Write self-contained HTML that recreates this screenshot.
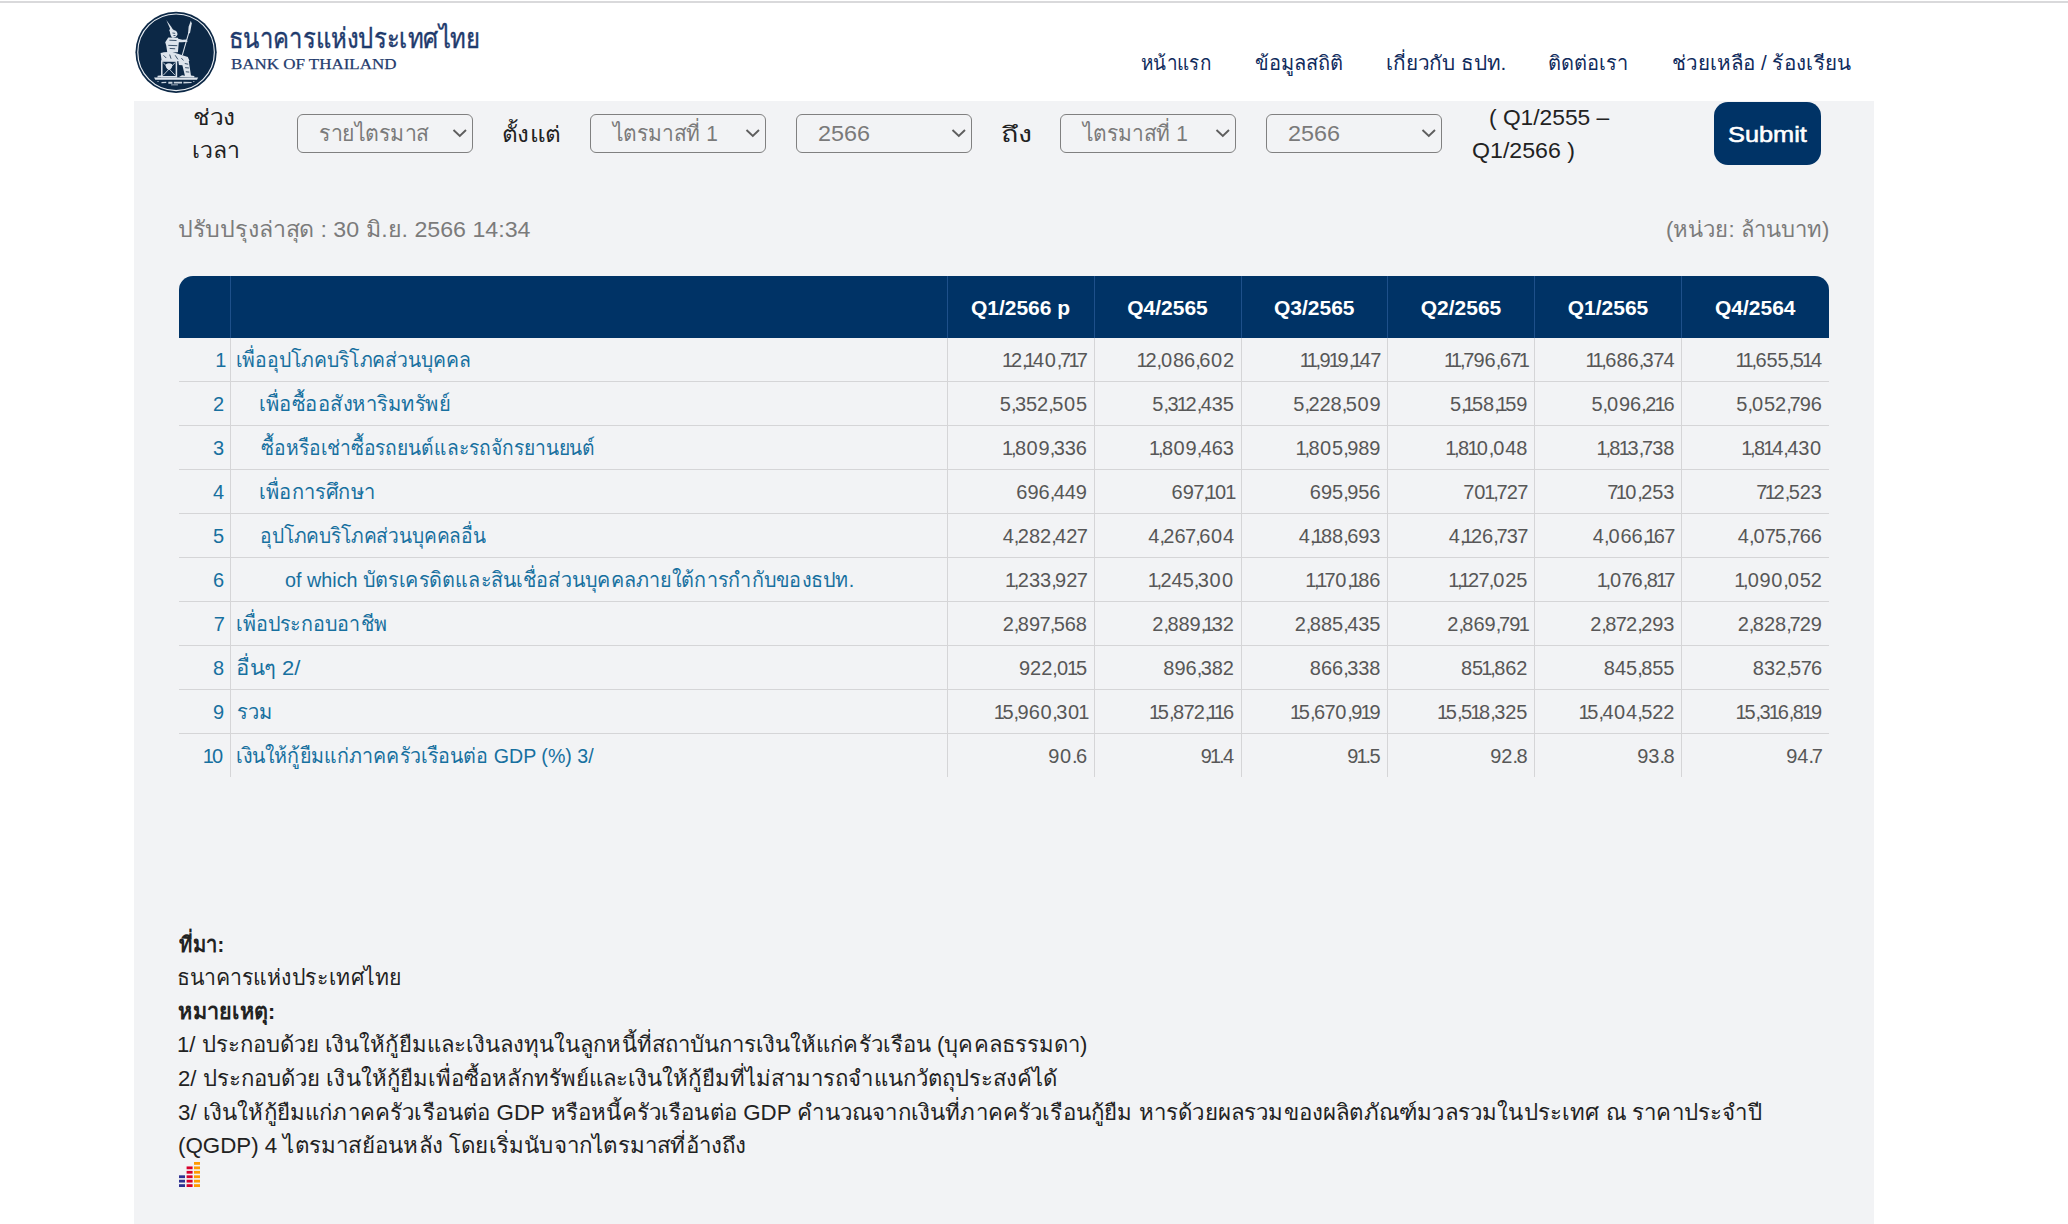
<!DOCTYPE html>
<html><head><meta charset="utf-8"><title>Bank of Thailand</title><style>
html,body{margin:0;padding:0}
body{width:2068px;height:1224px;overflow:hidden;background:#fff;position:relative;font-family:"Liberation Sans",sans-serif}
.t{position:absolute;white-space:nowrap}
.t span{display:inline}
.n{font-size:20px;line-height:30px;color:#575757}
.n i{font-style:normal}
.n .o{margin-left:-1.8px;letter-spacing:-2.3px}
.n .z{margin-left:.6px;letter-spacing:.8px}
.n .s{margin-left:-.6px;letter-spacing:-.9px}
.n .c{letter-spacing:-1.6px}
.sel{position:absolute;top:114px;width:174px;height:37px;border:1px solid #808080;border-radius:6px;box-sizing:content-box}
</style></head>
<body>
<div style="position:absolute;left:0;top:1px;width:2068px;height:2px;background:#d9d9db"></div>
<svg style="position:absolute;left:134px;top:10px" width="84" height="84" viewBox="0 0 1224 1224">
<circle cx="613" cy="616" r="592" fill="#0c2846"/>
<circle cx="613" cy="616" r="558" fill="none" stroke="#e9eef3" stroke-width="17"/>
<g fill="#dde4ec">
<path d="M470 145 L540 240 L565 280 L598 302 L512 308 L525 270 Z"/>
<path d="M522 300 L600 298 Q640 320 632 365 Q615 405 565 408 Q525 390 522 300 Z"/>
<path d="M500 400 L640 405 L655 450 L640 615 L485 620 L470 520 L455 470 Z"/>
<path d="M640 418 L705 432 L770 430 L780 462 L700 470 L640 470 Z"/>
<path d="M828 158 L842 198 L815 338 L788 338 L796 245 Z"/>
<path d="M793 320 L809 322 L712 660 L697 656 Z"/>
<path d="M388 628 Q430 605 560 612 L785 685 L808 742 L600 748 L402 738 Z"/>
<path d="M405 742 L618 742 L618 972 L405 972 Z" fill="none" stroke="#dde4ec" stroke-width="22"/>
<path d="M425 765 L600 952 M600 765 L425 952" stroke="#dde4ec" stroke-width="12"/>
<path d="M465 790 Q510 765 555 790 Q570 845 510 875 Q450 845 465 790 Z"/>
<path d="M645 748 L795 722 L830 955 L880 962 L878 982 L655 978 L700 952 L742 958 L705 805 L655 802 Z"/>
<path d="M345 958 L418 950 L418 978 L340 982 Z"/>
<path d="M292 985 L935 985 L918 1016 L310 1016 Z"/>
</g>
<g stroke="#0c2846" stroke-width="13" fill="none" opacity="0.85">
<path d="M515 440 L620 445 M500 515 L630 520 M520 560 L600 565"/>
<path d="M430 660 L470 700 M520 650 L540 710 M600 660 L640 720 M690 700 L720 735"/>
<path d="M560 335 L600 340 M575 372 L605 372"/>
<path d="M740 780 L790 790 M745 840 L800 845 M755 900 L805 905"/>
</g>
<g fill="#c9d3de">
<path d="M340 1035 L360 1035 L360 1045 L340 1045 Z M862 1035 L880 1035 L880 1045 L862 1045 Z"/>
<path d="M400 1050 L470 1045 L470 1062 L400 1066 Z M500 1045 L560 1045 L560 1075 L500 1075 Z M580 1045 L700 1045 L700 1070 L580 1070 Z M720 1045 L840 1050 L840 1065 L720 1070 Z"/>
<path d="M540 1085 L640 1085 L640 1097 L540 1097 Z"/>
</g></svg>
<div style="position:absolute;left:134px;top:101px;width:1740px;height:1123px;background:#f2f3f5"></div>
<div class="sel" style="left:297px"></div><svg style="position:absolute;left:452px;top:128px" width="16" height="10" viewBox="0 0 16 10"><path d="M1.5 2 L7.8 8 L14 2" fill="none" stroke="#5e5e5e" stroke-width="1.9"/></svg><div class="sel" style="left:590px"></div><svg style="position:absolute;left:745px;top:128px" width="16" height="10" viewBox="0 0 16 10"><path d="M1.5 2 L7.8 8 L14 2" fill="none" stroke="#5e5e5e" stroke-width="1.9"/></svg><div class="sel" style="left:796px"></div><svg style="position:absolute;left:951px;top:128px" width="16" height="10" viewBox="0 0 16 10"><path d="M1.5 2 L7.8 8 L14 2" fill="none" stroke="#5e5e5e" stroke-width="1.9"/></svg><div class="sel" style="left:1060px"></div><svg style="position:absolute;left:1215px;top:128px" width="16" height="10" viewBox="0 0 16 10"><path d="M1.5 2 L7.8 8 L14 2" fill="none" stroke="#5e5e5e" stroke-width="1.9"/></svg><div class="sel" style="left:1266px"></div><svg style="position:absolute;left:1421px;top:128px" width="16" height="10" viewBox="0 0 16 10"><path d="M1.5 2 L7.8 8 L14 2" fill="none" stroke="#5e5e5e" stroke-width="1.9"/></svg>
<div style="position:absolute;left:1714px;top:102px;width:107px;height:63px;border-radius:14px;background:#003366"></div>
<div style="position:absolute;left:179px;top:276px;width:1650px;height:62px;border-radius:14px 14px 0 0;background:#003366"></div>
<div style="position:absolute;left:947px;top:276px;width:1px;height:62px;background:#1e508a"></div><div style="position:absolute;left:947px;top:338px;width:1px;height:439px;background:#d5d5d7"></div><div style="position:absolute;left:1094px;top:276px;width:1px;height:62px;background:#1e508a"></div><div style="position:absolute;left:1094px;top:338px;width:1px;height:439px;background:#d5d5d7"></div><div style="position:absolute;left:1241px;top:276px;width:1px;height:62px;background:#1e508a"></div><div style="position:absolute;left:1241px;top:338px;width:1px;height:439px;background:#d5d5d7"></div><div style="position:absolute;left:1387px;top:276px;width:1px;height:62px;background:#1e508a"></div><div style="position:absolute;left:1387px;top:338px;width:1px;height:439px;background:#d5d5d7"></div><div style="position:absolute;left:1534px;top:276px;width:1px;height:62px;background:#1e508a"></div><div style="position:absolute;left:1534px;top:338px;width:1px;height:439px;background:#d5d5d7"></div><div style="position:absolute;left:1681px;top:276px;width:1px;height:62px;background:#1e508a"></div><div style="position:absolute;left:1681px;top:338px;width:1px;height:439px;background:#d5d5d7"></div><div style="position:absolute;left:230px;top:276px;width:1px;height:62px;background:#1e508a"></div><div style="position:absolute;left:230px;top:338px;width:1px;height:439px;background:#d5d5d7"></div><div style="position:absolute;left:179px;top:381px;width:1650px;height:1px;background:#d5d5d7"></div><div style="position:absolute;left:179px;top:425px;width:1650px;height:1px;background:#d5d5d7"></div><div style="position:absolute;left:179px;top:469px;width:1650px;height:1px;background:#d5d5d7"></div><div style="position:absolute;left:179px;top:513px;width:1650px;height:1px;background:#d5d5d7"></div><div style="position:absolute;left:179px;top:557px;width:1650px;height:1px;background:#d5d5d7"></div><div style="position:absolute;left:179px;top:601px;width:1650px;height:1px;background:#d5d5d7"></div><div style="position:absolute;left:179px;top:645px;width:1650px;height:1px;background:#d5d5d7"></div><div style="position:absolute;left:179px;top:689px;width:1650px;height:1px;background:#d5d5d7"></div><div style="position:absolute;left:179px;top:733px;width:1650px;height:1px;background:#d5d5d7"></div>
<div class="t" id="title" style="top:17.5px;font-size:28px;line-height:42px;color:#1f3b6d;-webkit-text-stroke:0.4px #1f3b6d;left:229.30px;transform-origin:0 0;transform:scaleX(0.8517);"><span>ธนาคารแห่งประเทศไทย</span></div><div class="t" id="bot" style="top:52.0px;font-size:15.5px;line-height:23px;color:#1f3b6d;-webkit-text-stroke:0.25px #1f3b6d;font-family:'Liberation Serif', serif;left:230.91px;transform-origin:0 0;transform:scaleX(1.0933);"><span>BANK OF THAILAND</span></div><div class="t" id="nav0" style="top:47.5px;font-size:20px;line-height:30px;color:#102b5c;left:1141.06px;transform-origin:0 0;transform:scaleX(0.9444);"><span>หน้าแรก</span></div><div class="t" id="nav1" style="top:47.5px;font-size:20px;line-height:30px;color:#102b5c;left:1255.00px;transform-origin:0 0;"><span>ข้อมูลสถิติ</span></div><div class="t" id="nav2" style="top:47.5px;font-size:20px;line-height:30px;color:#102b5c;left:1385.93px;transform-origin:0 0;transform:scaleX(1.0357);"><span>เกี่ยวกับ ธปท.</span></div><div class="t" id="nav3" style="top:47.5px;font-size:20px;line-height:30px;color:#102b5c;left:1548.00px;transform-origin:0 0;"><span>ติดต่อเรา</span></div><div class="t" id="nav4" style="top:47.5px;font-size:20px;line-height:30px;color:#102b5c;left:1671.97px;transform-origin:0 0;transform:scaleX(1.0289);"><span>ช่วยเหลือ / ร้องเรียน</span></div><div class="t" id="f_chuang" style="top:100.5px;font-size:22px;line-height:33px;color:#222222;left:192.89px;transform-origin:0 0;transform:scaleX(1.1143);"><span>ช่วง</span></div><div class="t" id="f_wela" style="top:134.0px;font-size:22px;line-height:33px;color:#222222;left:191.90px;transform-origin:0 0;transform:scaleX(1.0488);"><span>เวลา</span></div><div class="t" id="f_tangtae" style="top:117.5px;font-size:22px;line-height:33px;color:#222222;left:501.80px;transform-origin:0 0;transform:scaleX(1.1000);"><span>ตั้งแต่</span></div><div class="t" id="f_thueng" style="top:117.5px;font-size:22px;line-height:33px;color:#222222;left:1000.54px;transform-origin:0 0;transform:scaleX(1.3095);"><span>ถึง</span></div><div class="t" id="s1" style="top:117.0px;font-size:22px;line-height:33px;color:#7a7a7a;left:319.04px;transform-origin:0 0;transform:scaleX(0.9646);"><span>รายไตรมาส</span></div><div class="t" id="s2" style="top:117.0px;font-size:22px;line-height:33px;color:#7a7a7a;left:612.98px;transform-origin:0 0;transform:scaleX(0.9500);"><span>ไตรมาสที่ 1</span></div><div class="t" id="s3" style="top:117.0px;font-size:22px;line-height:33px;color:#7a7a7a;left:817.94px;transform-origin:0 0;transform:scaleX(1.0638);"><span>2566</span></div><div class="t" id="s4" style="top:117.0px;font-size:22px;line-height:33px;color:#7a7a7a;left:1082.97px;transform-origin:0 0;transform:scaleX(0.9500);"><span>ไตรมาสที่ 1</span></div><div class="t" id="s5" style="top:117.0px;font-size:22px;line-height:33px;color:#7a7a7a;left:1287.94px;transform-origin:0 0;transform:scaleX(1.0638);"><span>2566</span></div><div class="t" id="range1" style="top:101.0px;font-size:22px;line-height:33px;color:#222222;left:1488.97px;transform-origin:0 0;transform:scaleX(1.0348);"><span>( Q1/2555 –</span></div><div class="t" id="range2" style="top:134.0px;font-size:22px;line-height:33px;color:#222222;left:1471.95px;transform-origin:0 0;transform:scaleX(1.0521);"><span>Q1/2566 )</span></div><div class="t" id="submit" style="top:118.0px;font-size:22px;line-height:33px;color:#ffffff;-webkit-text-stroke:0.55px #ffffff;left:1727.70px;transform-origin:0 0;transform:scaleX(1.1515);"><span>Submit</span></div><div class="t" id="upd" style="top:213.0px;font-size:22px;line-height:33px;color:#7b7b7b;left:177.92px;transform-origin:0 0;transform:scaleX(1.0541);"><span>ปรับปรุงล่าสุด : 30 มิ.ย. 2566 14:34</span></div><div class="t" id="unit" style="top:213.0px;font-size:22px;line-height:33px;color:#7b7b7b;left:1666.00px;transform-origin:0 0;transform:scaleX(1.0031);"><span>(หน่วย: ล้านบาท)</span></div><div class="t" id="h0" style="top:291.5px;font-size:21px;line-height:32px;color:#ffffff;font-weight:700;left:947.0px;width:147.0px;text-align:center;"><span>Q1/2566 p</span></div><div class="t" id="h1" style="top:291.5px;font-size:21px;line-height:32px;color:#ffffff;font-weight:700;left:1094.0px;width:147.0px;text-align:center;"><span>Q4/2565</span></div><div class="t" id="h2" style="top:291.5px;font-size:21px;line-height:32px;color:#ffffff;font-weight:700;left:1241.0px;width:146.5px;text-align:center;"><span>Q3/2565</span></div><div class="t" id="h3" style="top:291.5px;font-size:21px;line-height:32px;color:#ffffff;font-weight:700;left:1387.5px;width:147.0px;text-align:center;"><span>Q2/2565</span></div><div class="t" id="h4" style="top:291.5px;font-size:21px;line-height:32px;color:#ffffff;font-weight:700;left:1534.5px;width:147.0px;text-align:center;"><span>Q1/2565</span></div><div class="t" id="h5" style="top:291.5px;font-size:21px;line-height:32px;color:#ffffff;font-weight:700;left:1681.5px;width:147.5px;text-align:center;"><span>Q4/2564</span></div><div class="t" id="lab0" style="top:343.5px;font-size:21px;line-height:32px;color:#17709f;left:236.16px;transform-origin:0 0;transform:scaleX(0.9219);"><span>เพื่ออุปโภคบริโภคส่วนบุคคล</span></div><div class="t" id="lab1" style="top:387.5px;font-size:21px;line-height:32px;color:#17709f;left:259.48px;transform-origin:0 0;transform:scaleX(0.9607);"><span>เพื่อซื้ออสังหาริมทรัพย์</span></div><div class="t" id="lab2" style="top:431.5px;font-size:21px;line-height:32px;color:#17709f;left:260.50px;transform-origin:0 0;transform:scaleX(0.9154);"><span>ซื้อหรือเช่าซื้อรถยนต์และรถจักรยานยนต์</span></div><div class="t" id="lab3" style="top:475.5px;font-size:21px;line-height:32px;color:#17709f;left:259.49px;transform-origin:0 0;transform:scaleX(0.9559);"><span>เพื่อการศึกษา</span></div><div class="t" id="lab4" style="top:519.5px;font-size:21px;line-height:32px;color:#17709f;left:259.60px;transform-origin:0 0;transform:scaleX(0.9098);"><span>อุปโภคบริโภคส่วนบุคคลอื่น</span></div><div class="t" id="lab5" style="top:563.5px;font-size:21px;line-height:32px;color:#17709f;left:284.83px;transform-origin:0 0;transform:scaleX(0.9412);"><span>of which บัตรเครดิตและสินเชื่อส่วนบุคคลภายใต้การกำกับของธปท.</span></div><div class="t" id="lab6" style="top:607.5px;font-size:21px;line-height:32px;color:#17709f;left:236.12px;transform-origin:0 0;transform:scaleX(0.9380);"><span>เพื่อประกอบอาชีพ</span></div><div class="t" id="lab7" style="top:651.5px;font-size:21px;line-height:32px;color:#17709f;left:235.90px;transform-origin:0 0;transform:scaleX(1.0508);"><span>อื่นๆ 2/</span></div><div class="t" id="lab8" style="top:695.5px;font-size:21px;line-height:32px;color:#17709f;left:237.04px;transform-origin:0 0;transform:scaleX(0.9559);"><span>รวม</span></div><div class="t" id="lab9" style="top:739.5px;font-size:21px;line-height:32px;color:#17709f;left:236.13px;transform-origin:0 0;transform:scaleX(0.9344);"><span>เงินให้กู้ยืมแก่ภาคครัวเรือนต่อ GDP (%) 3/</span></div><div class="t" id="fn_src" style="top:928.0px;font-size:22px;line-height:33px;color:#222222;font-weight:700;left:179.00px;transform-origin:0 0;transform:scaleX(0.9149);"><span>ที่มา:</span></div><div class="t" id="fn_bot" style="top:961.0px;font-size:22px;line-height:33px;color:#222222;left:177.07px;transform-origin:0 0;transform:scaleX(0.9651);"><span>ธนาคารแห่งประเทศไทย</span></div><div class="t" id="fn_note" style="top:995.0px;font-size:22px;line-height:33px;color:#222222;font-weight:700;left:178.02px;transform-origin:0 0;transform:scaleX(0.9792);"><span>หมายเหตุ:</span></div><div class="t" id="fn1" style="top:1028.0px;font-size:22px;line-height:33px;color:#222222;left:176.99px;transform-origin:0 0;transform:scaleX(1.0044);"><span>1/ ประกอบด้วย เงินให้กู้ยืมและเงินลงทุนในลูกหนี้ที่สถาบันการเงินให้แก่ครัวเรือน (บุคคลธรรมดา)</span></div><div class="t" id="fn2" style="top:1061.5px;font-size:22px;line-height:33px;color:#222222;left:177.99px;transform-origin:0 0;transform:scaleX(1.0057);"><span>2/ ประกอบด้วย เงินให้กู้ยืมเพื่อซื้อหลักทรัพย์และเงินให้กู้ยืมที่ไม่สามารถจำแนกวัตถุประสงค์ได้</span></div><div class="t" id="fn3" style="top:1095.5px;font-size:22px;line-height:33px;color:#222222;left:177.99px;transform-origin:0 0;transform:scaleX(1.0128);"><span>3/ เงินให้กู้ยืมแก่ภาคครัวเรือนต่อ GDP หรือหนี้ครัวเรือนต่อ GDP คำนวณจากเงินที่ภาคครัวเรือนกู้ยืม หารด้วยผลรวมของผลิตภัณฑ์มวลรวมในประเทศ ณ ราคาประจำปี</span></div><div class="t" id="fn4" style="top:1128.5px;font-size:22px;line-height:33px;color:#222222;left:177.98px;transform-origin:0 0;transform:scaleX(1.0153);"><span>(QGDP) 4 ไตรมาสย้อนหลัง โดยเริ่มนับจากไตรมาสที่อ้างถึง</span></div>
<div class="t n" style="top:345.0px;left:179.0px;width:45px;text-align:right;color:#17709f;font-size:20px;line-height:30px;"><i class="o">1</i></div><div class="t n" style="top:345.0px;right:981.0px;"><i class="o">1</i>2<i class="c">,</i><i class="o">1</i>4<i class="z">0</i><i class="c">,</i><i class="s">7</i><i class="o">1</i><i class="s">7</i></div><div class="t n" style="top:345.0px;right:834.0px;"><i class="o">1</i>2<i class="c">,</i><i class="z">0</i>86<i class="c">,</i>6<i class="z">0</i>2</div><div class="t n" style="top:345.0px;right:687.5px;"><i class="o">1</i><i class="o">1</i><i class="c">,</i>9<i class="o">1</i>9<i class="c">,</i><i class="o">1</i>4<i class="s">7</i></div><div class="t n" style="top:345.0px;right:540.5px;"><i class="o">1</i><i class="o">1</i><i class="c">,</i><i class="s">7</i>96<i class="c">,</i>6<i class="s">7</i><i class="o">1</i></div><div class="t n" style="top:345.0px;right:393.5px;"><i class="o">1</i><i class="o">1</i><i class="c">,</i>686<i class="c">,</i>3<i class="s">7</i>4</div><div class="t n" style="top:345.0px;right:246.0px;"><i class="o">1</i><i class="o">1</i><i class="c">,</i>655<i class="c">,</i>5<i class="o">1</i>4</div><div class="t n" style="top:389.0px;left:179.0px;width:45px;text-align:right;color:#17709f;font-size:20px;line-height:30px;">2</div><div class="t n" style="top:389.0px;right:981.0px;">5<i class="c">,</i>352<i class="c">,</i>5<i class="z">0</i>5</div><div class="t n" style="top:389.0px;right:834.0px;">5<i class="c">,</i>3<i class="o">1</i>2<i class="c">,</i>435</div><div class="t n" style="top:389.0px;right:687.5px;">5<i class="c">,</i>228<i class="c">,</i>5<i class="z">0</i>9</div><div class="t n" style="top:389.0px;right:540.5px;">5<i class="c">,</i><i class="o">1</i>58<i class="c">,</i><i class="o">1</i>59</div><div class="t n" style="top:389.0px;right:393.5px;">5<i class="c">,</i><i class="z">0</i>96<i class="c">,</i>2<i class="o">1</i>6</div><div class="t n" style="top:389.0px;right:246.0px;">5<i class="c">,</i><i class="z">0</i>52<i class="c">,</i><i class="s">7</i>96</div><div class="t n" style="top:433.0px;left:179.0px;width:45px;text-align:right;color:#17709f;font-size:20px;line-height:30px;">3</div><div class="t n" style="top:433.0px;right:981.0px;"><i class="o">1</i><i class="c">,</i>8<i class="z">0</i>9<i class="c">,</i>336</div><div class="t n" style="top:433.0px;right:834.0px;"><i class="o">1</i><i class="c">,</i>8<i class="z">0</i>9<i class="c">,</i>463</div><div class="t n" style="top:433.0px;right:687.5px;"><i class="o">1</i><i class="c">,</i>8<i class="z">0</i>5<i class="c">,</i>989</div><div class="t n" style="top:433.0px;right:540.5px;"><i class="o">1</i><i class="c">,</i>8<i class="o">1</i><i class="z">0</i><i class="c">,</i><i class="z">0</i>48</div><div class="t n" style="top:433.0px;right:393.5px;"><i class="o">1</i><i class="c">,</i>8<i class="o">1</i>3<i class="c">,</i><i class="s">7</i>38</div><div class="t n" style="top:433.0px;right:246.0px;"><i class="o">1</i><i class="c">,</i>8<i class="o">1</i>4<i class="c">,</i>43<i class="z">0</i></div><div class="t n" style="top:477.0px;left:179.0px;width:45px;text-align:right;color:#17709f;font-size:20px;line-height:30px;">4</div><div class="t n" style="top:477.0px;right:981.0px;">696<i class="c">,</i>449</div><div class="t n" style="top:477.0px;right:834.0px;">69<i class="s">7</i><i class="c">,</i><i class="o">1</i><i class="z">0</i><i class="o">1</i></div><div class="t n" style="top:477.0px;right:687.5px;">695<i class="c">,</i>956</div><div class="t n" style="top:477.0px;right:540.5px;"><i class="s">7</i><i class="z">0</i><i class="o">1</i><i class="c">,</i><i class="s">7</i>2<i class="s">7</i></div><div class="t n" style="top:477.0px;right:393.5px;"><i class="s">7</i><i class="o">1</i><i class="z">0</i><i class="c">,</i>253</div><div class="t n" style="top:477.0px;right:246.0px;"><i class="s">7</i><i class="o">1</i>2<i class="c">,</i>523</div><div class="t n" style="top:521.0px;left:179.0px;width:45px;text-align:right;color:#17709f;font-size:20px;line-height:30px;">5</div><div class="t n" style="top:521.0px;right:981.0px;">4<i class="c">,</i>282<i class="c">,</i>42<i class="s">7</i></div><div class="t n" style="top:521.0px;right:834.0px;">4<i class="c">,</i>26<i class="s">7</i><i class="c">,</i>6<i class="z">0</i>4</div><div class="t n" style="top:521.0px;right:687.5px;">4<i class="c">,</i><i class="o">1</i>88<i class="c">,</i>693</div><div class="t n" style="top:521.0px;right:540.5px;">4<i class="c">,</i><i class="o">1</i>26<i class="c">,</i><i class="s">7</i>3<i class="s">7</i></div><div class="t n" style="top:521.0px;right:393.5px;">4<i class="c">,</i><i class="z">0</i>66<i class="c">,</i><i class="o">1</i>6<i class="s">7</i></div><div class="t n" style="top:521.0px;right:246.0px;">4<i class="c">,</i><i class="z">0</i><i class="s">7</i>5<i class="c">,</i><i class="s">7</i>66</div><div class="t n" style="top:565.0px;left:179.0px;width:45px;text-align:right;color:#17709f;font-size:20px;line-height:30px;">6</div><div class="t n" style="top:565.0px;right:981.0px;"><i class="o">1</i><i class="c">,</i>233<i class="c">,</i>92<i class="s">7</i></div><div class="t n" style="top:565.0px;right:834.0px;"><i class="o">1</i><i class="c">,</i>245<i class="c">,</i>3<i class="z">0</i><i class="z">0</i></div><div class="t n" style="top:565.0px;right:687.5px;"><i class="o">1</i><i class="c">,</i><i class="o">1</i><i class="s">7</i><i class="z">0</i><i class="c">,</i><i class="o">1</i>86</div><div class="t n" style="top:565.0px;right:540.5px;"><i class="o">1</i><i class="c">,</i><i class="o">1</i>2<i class="s">7</i><i class="c">,</i><i class="z">0</i>25</div><div class="t n" style="top:565.0px;right:393.5px;"><i class="o">1</i><i class="c">,</i><i class="z">0</i><i class="s">7</i>6<i class="c">,</i>8<i class="o">1</i><i class="s">7</i></div><div class="t n" style="top:565.0px;right:246.0px;"><i class="o">1</i><i class="c">,</i><i class="z">0</i>9<i class="z">0</i><i class="c">,</i><i class="z">0</i>52</div><div class="t n" style="top:609.0px;left:179.0px;width:45px;text-align:right;color:#17709f;font-size:20px;line-height:30px;"><i class="s">7</i></div><div class="t n" style="top:609.0px;right:981.0px;">2<i class="c">,</i>89<i class="s">7</i><i class="c">,</i>568</div><div class="t n" style="top:609.0px;right:834.0px;">2<i class="c">,</i>889<i class="c">,</i><i class="o">1</i>32</div><div class="t n" style="top:609.0px;right:687.5px;">2<i class="c">,</i>885<i class="c">,</i>435</div><div class="t n" style="top:609.0px;right:540.5px;">2<i class="c">,</i>869<i class="c">,</i><i class="s">7</i>9<i class="o">1</i></div><div class="t n" style="top:609.0px;right:393.5px;">2<i class="c">,</i>8<i class="s">7</i>2<i class="c">,</i>293</div><div class="t n" style="top:609.0px;right:246.0px;">2<i class="c">,</i>828<i class="c">,</i><i class="s">7</i>29</div><div class="t n" style="top:653.0px;left:179.0px;width:45px;text-align:right;color:#17709f;font-size:20px;line-height:30px;">8</div><div class="t n" style="top:653.0px;right:981.0px;">922<i class="c">,</i><i class="z">0</i><i class="o">1</i>5</div><div class="t n" style="top:653.0px;right:834.0px;">896<i class="c">,</i>382</div><div class="t n" style="top:653.0px;right:687.5px;">866<i class="c">,</i>338</div><div class="t n" style="top:653.0px;right:540.5px;">85<i class="o">1</i><i class="c">,</i>862</div><div class="t n" style="top:653.0px;right:393.5px;">845<i class="c">,</i>855</div><div class="t n" style="top:653.0px;right:246.0px;">832<i class="c">,</i>5<i class="s">7</i>6</div><div class="t n" style="top:697.0px;left:179.0px;width:45px;text-align:right;color:#17709f;font-size:20px;line-height:30px;">9</div><div class="t n" style="top:697.0px;right:981.0px;"><i class="o">1</i>5<i class="c">,</i>96<i class="z">0</i><i class="c">,</i>3<i class="z">0</i><i class="o">1</i></div><div class="t n" style="top:697.0px;right:834.0px;"><i class="o">1</i>5<i class="c">,</i>8<i class="s">7</i>2<i class="c">,</i><i class="o">1</i><i class="o">1</i>6</div><div class="t n" style="top:697.0px;right:687.5px;"><i class="o">1</i>5<i class="c">,</i>6<i class="s">7</i><i class="z">0</i><i class="c">,</i>9<i class="o">1</i>9</div><div class="t n" style="top:697.0px;right:540.5px;"><i class="o">1</i>5<i class="c">,</i>5<i class="o">1</i>8<i class="c">,</i>325</div><div class="t n" style="top:697.0px;right:393.5px;"><i class="o">1</i>5<i class="c">,</i>4<i class="z">0</i>4<i class="c">,</i>522</div><div class="t n" style="top:697.0px;right:246.0px;"><i class="o">1</i>5<i class="c">,</i>3<i class="o">1</i>6<i class="c">,</i>8<i class="o">1</i>9</div><div class="t n" style="top:741.0px;left:179.0px;width:45px;text-align:right;color:#17709f;font-size:20px;line-height:30px;"><i class="o">1</i><i class="z">0</i></div><div class="t n" style="top:741.0px;right:981.0px;">9<i class="z">0</i><i class="c">.</i>6</div><div class="t n" style="top:741.0px;right:834.0px;">9<i class="o">1</i><i class="c">.</i>4</div><div class="t n" style="top:741.0px;right:687.5px;">9<i class="o">1</i><i class="c">.</i>5</div><div class="t n" style="top:741.0px;right:540.5px;">92<i class="c">.</i>8</div><div class="t n" style="top:741.0px;right:393.5px;">93<i class="c">.</i>8</div><div class="t n" style="top:741.0px;right:246.0px;">94<i class="c">.</i><i class="s">7</i></div>
<svg style="position:absolute;left:178px;top:1160px" width="24" height="30" viewBox="0 0 24 30"><rect x="1.0" y="24.20" width="6" height="2.8" fill="#2e3192"/><rect x="1.0" y="19.76" width="6" height="2.8" fill="#2e3192"/><rect x="1.0" y="15.32" width="6" height="2.8" fill="#2e3192"/><rect x="8.6" y="24.20" width="6" height="2.8" fill="#d7002d"/><rect x="8.6" y="19.76" width="6" height="2.8" fill="#d7002d"/><rect x="8.6" y="15.32" width="6" height="2.8" fill="#d7002d"/><rect x="8.6" y="10.88" width="6" height="2.8" fill="#d7002d"/><rect x="8.6" y="6.44" width="6" height="2.8" fill="#d7002d"/><rect x="16.0" y="24.20" width="6" height="2.8" fill="#ff9a00"/><rect x="16.0" y="19.76" width="6" height="2.8" fill="#ff9a00"/><rect x="16.0" y="15.32" width="6" height="2.8" fill="#ff9a00"/><rect x="16.0" y="10.88" width="6" height="2.8" fill="#ff9a00"/><rect x="16.0" y="6.44" width="6" height="2.8" fill="#ff9a00"/><rect x="16.0" y="2.00" width="6" height="2.8" fill="#ff9a00"/></svg>
<script>
(function(){var m={"title": 250.41, "bot": 165.4, "nav0": 69.89, "nav1": 88.0, "nav2": 120.27, "nav3": 80.0, "nav4": 179.72, "f_chuang": 42.34, "f_wela": 47.2, "f_tangtae": 58.3, "f_thueng": 31.43, "s1": 109.96, "s2": 104.84, "s3": 52.08, "s4": 104.84, "s5": 52.08, "range1": 120.23, "range2": 102.94, "submit": 78.86, "upd": 352.45, "unit": 163.4, "lab0": 235.09, "lab1": 191.18, "lab2": 334.13, "lab3": 116.62, "lab4": 225.62, "lab5": 569.16, "lab6": 151.01, "lab7": 64.48, "lab8": 35.37, "lab9": 357.69, "fn_src": 45.13, "fn_bot": 224.86, "fn_note": 97.26, "fn1": 910.36, "fn2": 879.59, "fn3": 1583.84, "fn4": 568.56};for(var k in m){var e=document.getElementById(k);if(!e)continue;var s=e.firstChild;if(!s)continue;var t=e.style.transform;e.style.transform='none';var w=s.getBoundingClientRect().width;e.style.transform=t;if(w>0){var c=m[k]/w;if(c>0.3&&c<3)e.style.transform='scaleX('+c.toFixed(4)+')';}}})();
</script>
</body></html>
